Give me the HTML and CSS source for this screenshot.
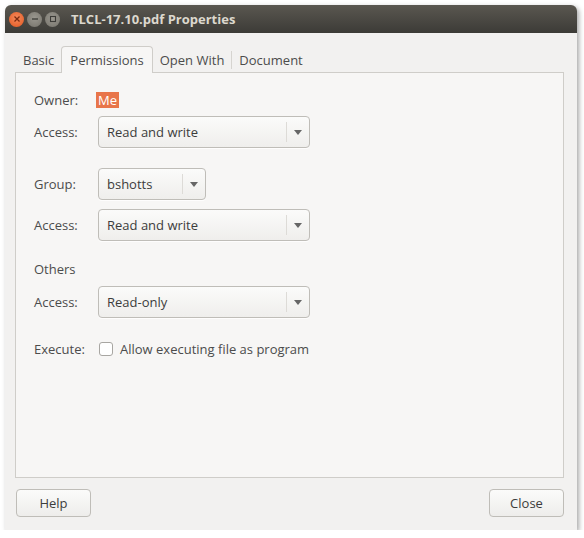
FILE: index.html
```html
<!DOCTYPE html>
<html>
<head>
<meta charset="utf-8">
<link rel="stylesheet" href="styles.css">
</head>
<body>
<div class="window">
  <div class="titlebar">
    <div class="wbtns">
      <span class="wbtn close"><svg width="8" height="8" viewBox="0 0 8 8"><path d="M1.5 1.5 L6.5 6.5 M6.5 1.5 L1.5 6.5" stroke="#7a2a10" stroke-width="1.3"/></svg></span>
      <span class="wbtn"><svg width="8" height="8" viewBox="0 0 8 8"><path d="M1 4 H7" stroke="#3c3b37" stroke-width="1.3"/></svg></span>
      <span class="wbtn"><svg width="8" height="8" viewBox="0 0 8 8"><rect x="1.5" y="1.5" width="5" height="5" fill="none" stroke="#3c3b37" stroke-width="1.1"/></svg></span>
    </div>
    <div class="title">TLCL-17.10.pdf Properties</div>
  </div>
  <div class="body">
    <div class="tabs">
      <div class="tab">Basic</div>
      <div class="tab active">Permissions</div>
      <div class="tab sep">Open With</div>
      <div class="tab sep">Document</div>
    </div>
    <div class="panel">
      <div class="row owner"><span class="label">Owner:</span><span class="me">Me</span></div>
      <div class="row"><span class="label">Access:</span><div class="combo wide"><span class="val">Read and write</span><span class="arrow"></span></div></div>
      <div class="row group"><span class="label">Group:</span><div class="combo narrow"><span class="val">bshotts</span><span class="arrow"></span></div></div>
      <div class="row"><span class="label">Access:</span><div class="combo wide"><span class="val">Read and write</span><span class="arrow"></span></div></div>
      <div class="row others"><span class="label">Others</span></div>
      <div class="row"><span class="label">Access:</span><div class="combo wide"><span class="val">Read-only</span><span class="arrow"></span></div></div>
      <div class="row exec"><span class="label">Execute:</span><span class="check"></span><span class="clabel">Allow executing file as program</span></div>
    </div>
    <div class="buttons">
      <div class="btn">Help</div>
      <div class="btn">Close</div>
    </div>
  </div>
</div>
</body>
</html>
```
FILE: styles.css
```css
html, body {
  margin: 0;
  padding: 0;
  background: #ffffff;
}
body {
  font-family: "Open Sans", "DejaVu Sans", sans-serif;
  font-size: 13px;
  color: #3c3c3c;
}
.window {
  margin: 5px 0 0 5px;
  width: 572px;
  height: 525px;
  border-radius: 6px 6px 0 0;
  box-shadow: 2px 2px 5px rgba(0,0,0,0.35);
  background: #f2f1f0;
  display: flex;
  flex-direction: column;
}
.titlebar {
  height: 28px;
  border-radius: 6px 6px 0 0;
  background: linear-gradient(#5a5750, #3c3b37);
  display: flex;
  align-items: center;
}
.wbtns {
  display: flex;
  gap: 3px;
  padding-left: 4px;
}
.wbtn {
  width: 15px;
  height: 15px;
  border-radius: 50%;
  background: radial-gradient(circle at 50% 40%, #9a978f, #76736b);
  display: flex;
  align-items: center;
  justify-content: center;
}
.wbtn.close {
  background: radial-gradient(circle at 50% 40%, #f58a5c, #e0561f);
}
.title {
  margin-left: 11px;
  color: #dcd8ce;
  font-weight: bold;
  font-size: 13px;
}
.body {
  flex: 1;
  padding: 11px 13px 13px 10px;
  display: flex;
  flex-direction: column;
}
.tabs {
  display: flex;
  height: 28px;
  align-items: flex-end;
  margin-left: 1px;
}
.tab {
  padding: 0 7px 3px;
  line-height: 18px;
  color: #4c4c4c;
}
.tab.sep {
  border-left: 1px solid #d6d4d0;
  height: 18px;
  margin-bottom: 3px;
  padding-bottom: 0;
}
.tab.active {
  height: 27px;
  box-sizing: border-box;
  padding: 4px 8px 0;
  border: 1px solid #cfcdc9;
  border-bottom: none;
  border-radius: 4px 4px 0 0;
  background: #f7f6f5;
  margin-bottom: -1px;
  position: relative;
  z-index: 1;
}
.tab.active + .tab.sep {
  border-left: none;
}
.panel {
  flex: 1;
  background: #f7f6f5;
  border: 1px solid #cfcdc9;
  padding: 19px 0 0 18px;
  display: flex;
  flex-direction: column;
}
.row {
  display: flex;
  align-items: center;
  margin-bottom: 9px;
}
.label {
  width: 64px;
  color: #4c4c4c;
}
.owner {
  height: 16px;
  margin-bottom: 8px;
}
.me {
  background: #e8754a;
  color: #fff;
  padding: 0 2px;
  line-height: 16px;
  margin-left: -2px;
}
.combo {
  height: 32px;
  box-sizing: border-box;
  border: 1px solid #bfbdb8;
  border-radius: 4px;
  background: linear-gradient(#fbfbfa, #efeeec);
  box-shadow: 0 1px 0 rgba(255,255,255,0.8);
  display: flex;
  align-items: center;
}
.combo.wide { width: 212px; }
.combo.narrow { width: 108px; }
.combo .val {
  flex: 1;
  padding-left: 8px;
  color: #3c3c3c;
}
.combo .arrow {
  width: 22px;
  height: 20px;
  border-left: 1px solid #dddbd7;
  display: flex;
  align-items: center;
  justify-content: center;
}
.combo .arrow::after {
  content: "";
  border-left: 4px solid transparent;
  border-right: 4px solid transparent;
  border-top: 5px solid #666;
}
.group { margin-top: 11px; }
.others { margin-top: 11px; height: 16px; }
.exec { margin-top: 13px; height: 18px; }
.check {
  width: 12px;
  height: 12px;
  border: 1px solid #a8a6a2;
  border-radius: 3px;
  background: #fff;
  margin: 0 7px 0 1px;
}
.clabel { color: #4c4c4c; }
.buttons {
  display: flex;
  justify-content: space-between;
  margin: 11px 0 0 1px;
}
.btn {
  width: 75px;
  height: 28px;
  box-sizing: border-box;
  border: 1px solid #bfbdb8;
  border-radius: 4px;
  background: linear-gradient(#fbfbfa, #eeedeb);
  display: flex;
  align-items: center;
  justify-content: center;
  color: #3c3c3c;
}
```
